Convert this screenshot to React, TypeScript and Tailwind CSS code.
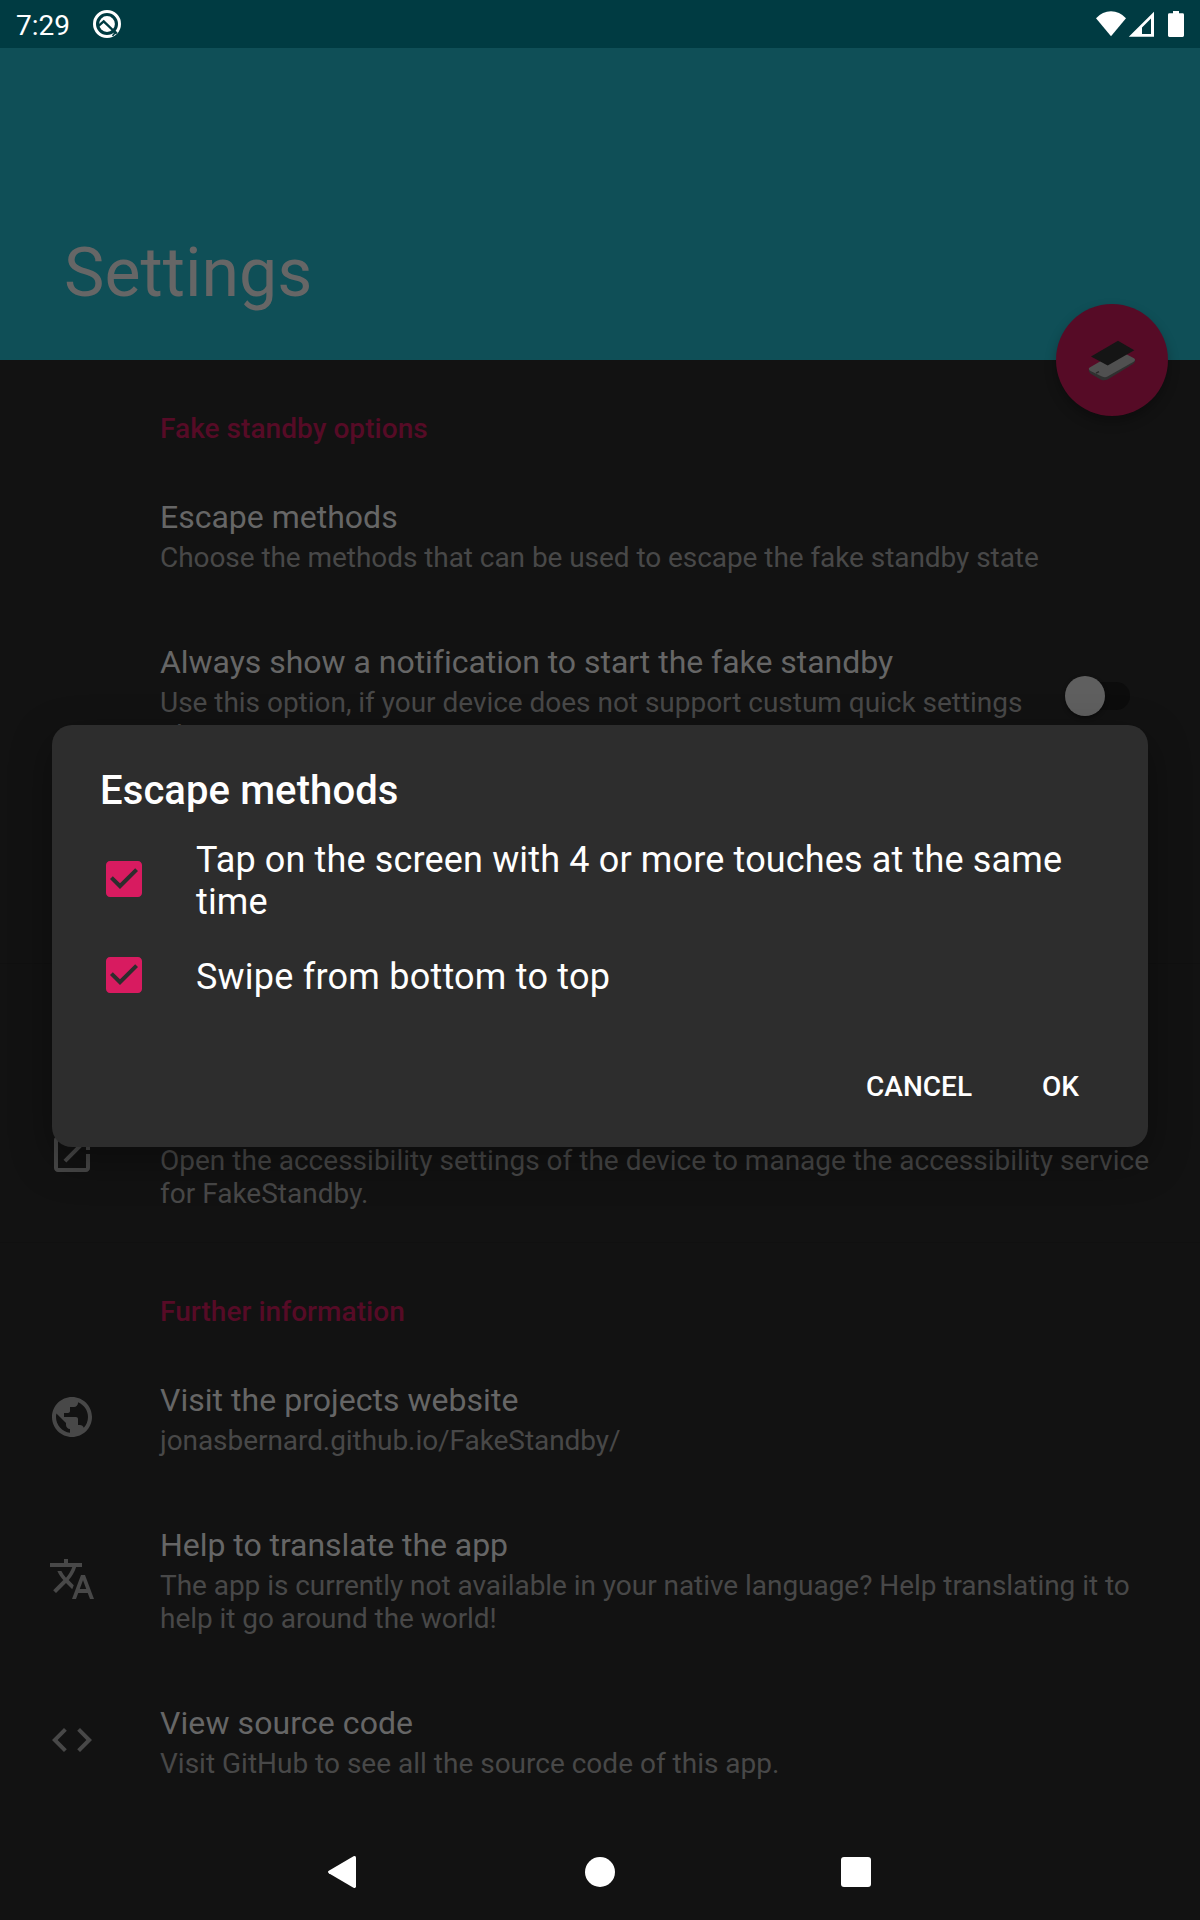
import type { ReactNode } from "react";

function StatusBar() {
  return (
    <header className="flex h-12 items-start justify-between bg-[#003b42] text-white">
      <div className="flex">
        <span className="ml-4 mt-[9px] w-[60px] text-[28px] leading-[33px]">7:29</span>
        <svg className="ml-4 mt-[9px]" width="30" height="30" viewBox="0 0 30 30" fill="none">
          <circle cx="15" cy="15" r="12.5" stroke="white" strokeWidth="3" />
          <circle cx="15" cy="15" r="7.9" fill="white" />
          <path d="M6.5 16.800 11.700 12.300 22.800 23" stroke="#003b42" strokeWidth="2.400" />
          <path d="M20.500 27 24 22.600" stroke="#003b42" strokeWidth="1.600" />
          <path d="M20.600 20.600 24.800 24.600" stroke="#003b42" strokeWidth="2.400" />
        </svg>
      </div>
      <svg className="mr-4" width="88" height="48" viewBox="1096 0 88 48" fill="white">
        <path d="M1111 36.300 1096 18.300Q1102.500 11.300 1111 11.300T1126 18.300Z" />
        <path fillRule="evenodd" d="M1128.800 36.800 1154 11.800V36.800ZM1142 34H1151V18.600L1142 27.400Z" />
        <path d="M1173 11h6v2.300h3.600q1.400 0 1.400 1.400v20.800q0 1.400-1.400 1.400h-13.200q-1.400 0-1.400-1.400V14.700q0-1.400 1.400-1.400h3.600z" />
      </svg>
    </header>
  );
}

function Fab() {
  return (
    <div className="absolute right-8 -bottom-14 z-10 size-28 rounded-full bg-[#560b26] shadow-[0_6px_12px_rgba(0,0,0,0.28)]">
      <svg width="112" height="112" viewBox="0 0 112 112">
        <path d="M32.700 65.500Q32.500 68.500 36 70.500L45 75.700Q48.500 77.200 52 75.300L77 60Q79.500 58.200 79.300 55.500Z" fill="#303030" />
        <path d="M33.700 63.600 62 47 69 49.600 78 54.300Q80 55.800 78 57.500L51.500 72.600Q49 74 46 72.600L34.500 67Q31.500 65.200 33.700 63.600Z" fill="#505050" />
        <path d="M40 69.200 43 67.700" stroke="#2a2a2a" strokeWidth="1.500" />
        <path d="M35 52.400 62 36.700 78.300 46.300 51.700 61.400Z" fill="#151515" />
      </svg>
    </div>
  );
}

function Category({ children }: { children: ReactNode }) {
  return (
    <h2 className="h-[102px] pt-[52px] pl-40 text-[28px] leading-[33px] font-medium tracking-[0.05px] text-[#560b26]">
      {children}
    </h2>
  );
}

type PreferenceProps = {
  icon?: string;
  title?: string;
  titleTracking?: string;
  lines: string[];
  tracking?: string;
  widget?: ReactNode;
};

function Preference({ icon, title, titleTracking = "", lines, tracking = "", widget }: PreferenceProps) {
  return (
    <div className="flex items-center pr-8 pl-12">
      <div className={lines.length === 1 ? "mb-px w-28 shrink-0" : "w-28 shrink-0"}>
        {icon && (
          <svg width="48" height="48" viewBox="0 0 24 24" fill="#484848">
            <path d={icon} />
          </svg>
        )}
      </div>
      <div className="grow pt-[34px] pb-[33px] whitespace-nowrap">
        <h3 className={`h-[42px] text-[32px] leading-[42px] text-[#666666] ${titleTracking}`}>{title}</h3>
        <div className={`mt-[3px] text-[28px] leading-[33px] text-[#484848] ${tracking}`}>
          {lines.map((line) => (
            <p key={line}>{line}</p>
          ))}
        </div>
      </div>
      {widget}
    </div>
  );
}

function Switch() {
  return (
    <div className="mr-[38px] flex h-7 w-[60px] shrink-0 items-center rounded-full bg-[#0c0c0c]">
      <div className="-ml-[5px] size-10 shrink-0 rounded-full bg-[#5f5f5f] shadow-[0_2px_4px_rgba(0,0,0,0.4)]" />
    </div>
  );
}

function CheckItem({ children }: { children: ReactNode }) {
  return (
    <label className="flex h-24 items-center">
      <svg className="mb-1 shrink-0" width="48" height="48" viewBox="0 0 24 24">
        <path
          fill="#d81b60"
          d="M19 3H5c-1.110 0-2 .9-2 2v14c0 1.100.89 2 2 2h14c1.110 0 2-.9 2-2V5c0-1.100-.89-2-2-2zm-9 14l-5-5 1.410-1.410L10 14.170l7.590-7.590L19 8l-9 9z"
        />
      </svg>
      <span className="ml-12 text-[36px] leading-[42px]">{children}</span>
    </label>
  );
}

function EscapeDialog() {
  return (
    <div
      role="dialog"
      className="absolute top-[725px] left-[52px] z-20 h-[422px] w-[1096px] rounded-[20px] bg-[#2d2d2d] pt-[42px] pr-[69px] pl-12 text-white shadow-[0_14px_40px_rgba(0,0,0,0.36)]"
    >
      <h2 className="mb-[19px] text-[40px] leading-[47px] font-medium tracking-[0.1px]">Escape methods</h2>
      <CheckItem>
        <span className="tracking-[0.15px]">Tap on the screen with 4 or more touches at the same</span>
        <br />
        <span className="tracking-[0.15px]">time</span>
      </CheckItem>
      <CheckItem>
        <span className="tracking-[0.22px]">Swipe from bottom to top</span>
      </CheckItem>
      <div className="mt-[45px] flex justify-end gap-[70px] text-[28px] leading-[33px] font-medium">
        <button>CANCEL</button>
        <button>OK</button>
      </div>
    </div>
  );
}

function NavigationBar() {
  return (
    <nav className="mt-auto flex h-24 items-center">
      <svg className="ml-[328px]" width="28" height="32" viewBox="0 0 28 32" fill="white">
        <path d="M25.500.3Q28-.6 28 1.800V30.200Q28 32.600 25.500 31.700L.8 17.200Q-.8 16 .8 14.800Z" />
      </svg>
      <div className="ml-[229px] size-[30px] rounded-full bg-white" />
      <div className="ml-[226px] size-[30px] rounded-[3px] bg-white" />
    </nav>
  );
}

const icons = {
  open: "M19 19H5V5h7V3H5c-1.110 0-2 .9-2 2v14c0 1.100.89 2 2 2h14c1.100 0 2-.9 2-2v-7h-2v7zM14 3v2h3.590l-9.830 9.830 1.410 1.410L19 6.410V10h2V3h-7z",
  globe:
    "M12 2C6.480 2 2 6.480 2 12s4.480 10 10 10 10-4.480 10-10S17.520 2 12 2zm-1 17.930c-3.950-.49-7-3.850-7-7.930 0-.62.080-1.210.210-1.790L9 15v1c0 1.100.9 2 2 2v1.930zm6.900-2.540c-.26-.81-1-1.390-1.900-1.390h-1v-3c0-.55-.45-1-1-1H8v-2h2c.55 0 1-.45 1-1V7h2c1.100 0 2-.9 2-2v-.41c2.930 1.190 5 4.060 5 7.410 0 2.080-.8 3.970-2.100 5.390z",
  translate:
    "M12.870 15.070l-2.540-2.510.030-.030c1.740-1.940 2.980-4.170 3.710-6.530H17V4h-7V2H8v2H1v1.990h11.170C11.500 7.920 10.440 9.750 9 11.350 8.070 10.320 7.300 9.190 6.690 8h-2c.73 1.630 1.730 3.170 2.980 4.560l-5.090 5.020L4 19l5-5 3.110 3.110.76-2.040zM18.500 10h-2L12 22h2l1.120-3h4.750L21 22h2l-4.500-12zm-2.620 7l1.620-4.330L19.120 17h-3.240z",
  code: "M9.400 16.600L4.800 12l4.600-4.600L8 6l-6 6 6 6 1.400-1.400zm5.200 0l4.600-4.600-4.600-4.600L16 6l6 6-6 6-1.400-1.400z",
};

export default function App() {
  return (
    <div className="relative flex h-[1920px] w-[1200px] flex-col overflow-hidden bg-[#121212] font-[Roboto,sans-serif]">
      <StatusBar />
      <div className="relative flex h-[312px] items-end bg-[#0f4f57] pb-[47px] pl-16">
        <h1 className="text-[68px] leading-[80px] text-[#666666]">Settings</h1>
        <Fab />
      </div>

      <main>
        <section className="h-[603px]">
          <Category>Fake standby options</Category>
          <Preference
            title="Escape methods"
            lines={["Choose the methods that can be used to escape the fake standby state"]}
            tracking="tracking-[-0.06px]"
          />
          <Preference
            title="Always show a notification to start the fake standby"
            titleTracking="tracking-[-0.03px]"
            lines={["Use this option, if your device does not support custum quick settings", "tiles."]}
            tracking="tracking-[-0.025px]"
            widget={<Switch />}
          />
        </section>
        <section className="border-t border-[#101010] pt-[101px]">
          <Preference
            icon={icons.open}
            lines={[
              "Open the accessibility settings of the device to manage the accessibility service",
              "for FakeStandby.",
            ]}
            tracking="tracking-[0.01px]"
          />
        </section>
        <section className="-mt-px border-t border-[#101010]">
          <Category>Further information</Category>
          <Preference
            icon={icons.globe}
            title="Visit the projects website"
            titleTracking="tracking-[0.03px]"
            lines={["jonasbernard.github.io/FakeStandby/"]}
            tracking="tracking-[-0.06px]"
          />
          <Preference
            icon={icons.translate}
            title="Help to translate the app"
            titleTracking="tracking-[-0.04px]"
            lines={[
              "The app is currently not available in your native language? Help translating it to",
              "help it go around the world!",
            ]}
            tracking="tracking-[-0.045px]"
          />
          <Preference
            icon={icons.code}
            title="View source code"
            titleTracking="tracking-[0.09px]"
            lines={["Visit GitHub to see all the source code of this app."]}
          />
        </section>
      </main>

      <NavigationBar />
      <EscapeDialog />
    </div>
  );
}
